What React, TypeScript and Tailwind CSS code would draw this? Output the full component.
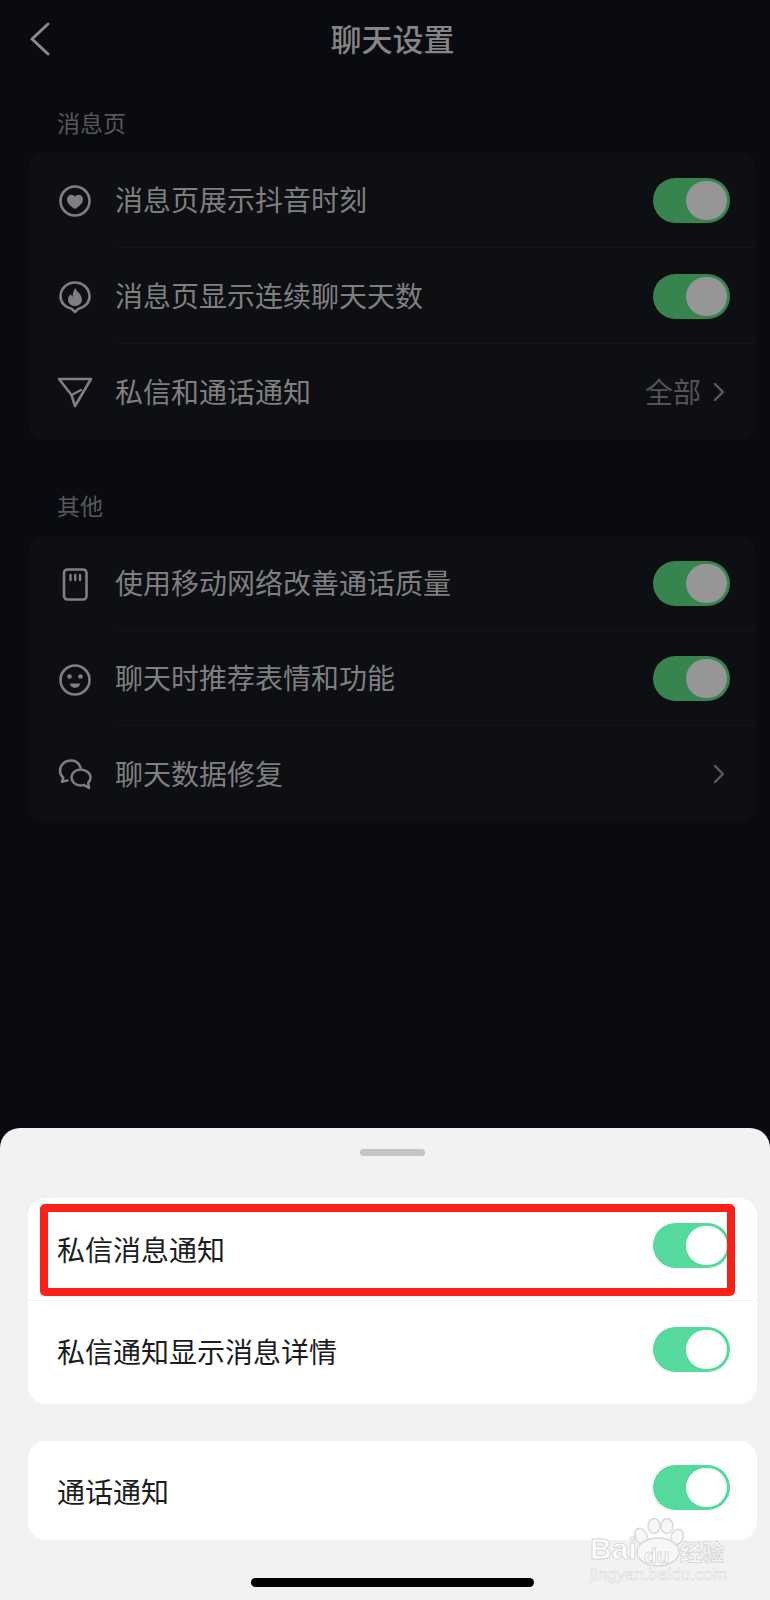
import React from 'react';

const Toggle: React.FC<{ light?: boolean }> = ({ light }) => (
  <div
    className={`relative h-[45px] w-[77px] shrink-0 rounded-full ${
      light ? 'bg-[#55d99c]' : 'mt-[1px] bg-[#36854f]'
    }`}
  >
    <div
      className={`absolute left-[33px] top-[3px] h-[39px] w-[41px] rounded-full ${
        light ? 'bg-white' : 'bg-[#969696]'
      }`}
    ></div>
  </div>
);

const Chevron = () => (
  <svg width="12" height="20" viewBox="0 0 12 20" fill="none" className="shrink-0">
    <path d="M2 2l8 8-8 8" stroke="#5c5c5e" strokeWidth="2.4" strokeLinecap="round" strokeLinejoin="round" />
  </svg>
);

const HeartIcon = () => (
  <svg width="36" height="36" viewBox="0 0 36 36" fill="none">
    <circle cx="18" cy="18" r="14.5" stroke="#7f7f81" strokeWidth="2.6" />
    <path d="M18 26c-5-3.2-8-6.2-8-9.6 0-2.8 2-4.6 4.400-4.600 1.500 0 2.800.7 3.600 1.900.8-1.200 2.100-1.900 3.600-1.900 2.400 0 4.400 1.800 4.400 4.600 0 3.400-3 6.400-8 9.600z" fill="#7f7f81" />
  </svg>
);

const FlameIcon = () => (
  <svg width="36" height="36" viewBox="0 0 36 36" fill="none">
    <path d="M18 33l-3-2.900C8.500 28.700 3.500 24 3.500 17.500 3.500 9.500 10 3.500 18 3.500s14.500 6 14.500 14c0 6.500-5 11.200-11.500 12.600z" stroke="#7f7f81" strokeWidth="2.6" strokeLinejoin="round" />
    <path d="M18.500 9c.5 3.500 6.500 6 6.500 11.500 0 3.800-3 6.500-7 6.500s-7-2.700-7-6.300c0-2.700 1.400-4.400 3-5.700.2 1.400.8 2.200 1.700 2.700C15.500 14.500 16.500 11 18.500 9z" fill="#7f7f81" />
  </svg>
);

const SendIcon = () => (
  <svg width="36" height="32" viewBox="0 0 36 32" fill="none">
    <path d="M2 2h32L18 29l-3.500-11z" stroke="#7f7f81" strokeWidth="2.6" strokeLinejoin="round" />
    <path d="M14.500 18L24 13" stroke="#7f7f81" strokeWidth="2.4" strokeLinecap="round" />
  </svg>
);

const SimIcon = () => (
  <svg width="36" height="36" viewBox="0 0 36 36" fill="none">
    <rect x="7" y="2.500" width="22.500" height="30" rx="3.500" stroke="#7f7f81" strokeWidth="2.6" />
    <path d="M13.500 8v5M18.200 8v5M23 8v5" stroke="#7f7f81" strokeWidth="2.400" strokeLinecap="round" />
  </svg>
);

const FaceIcon = () => (
  <svg width="36" height="36" viewBox="0 0 36 36" fill="none">
    <circle cx="18" cy="18" r="14.500" stroke="#7f7f81" strokeWidth="2.600" />
    <circle cx="12.500" cy="14.500" r="2.300" fill="#7f7f81" />
    <circle cx="23.500" cy="14.500" r="2.300" fill="#7f7f81" />
    <path d="M13 21.500h10c0 2.600-2.200 4.300-5 4.300s-5-1.700-5-4.300z" fill="#7f7f81" />
  </svg>
);

const ChatIcon = () => (
  <svg width="36" height="34" viewBox="0 0 36 34" fill="none">
    <path d="M23.500 9.500C22 5 18.500 2.500 14 2.500 8 2.500 3 7 3 12.500c0 3 1.300 5.500 3.300 7.200l-1.300 4 5.500-1.300" stroke="#7f7f81" strokeWidth="2.500" strokeLinecap="round" strokeLinejoin="round" />
    <path d="M23.500 11.500c-5 0-9 3.500-9 8s4 8 9 8c1.300 0 2.500-.2 3.500-.6l5 3.100-.8-5.200c1.400-1.400 2.300-3.300 2.300-5.300 0-4.500-5-8-10-8z" stroke="#7f7f81" strokeWidth="2.500" strokeLinejoin="round" />
  </svg>
);

const DarkRow: React.FC<{
  icon: React.ReactNode;
  label: string;
  last?: boolean;
  short?: boolean;
  children: React.ReactNode;
}> = ({ icon, label, last, short, children }) => (
  <div className={`flex items-stretch ${short ? 'h-[95px]' : 'h-[96px]'}`}>
    <div className="flex w-[87px] shrink-0 items-center pl-[29px] pt-[2px]">{icon}</div>
    <div className={`flex flex-1 items-center justify-between pr-[26px] ${last ? '' : 'border-b border-[#141519]'}`}>
      <span className="pb-[2px] text-[28px] leading-[40px] text-[#7f7f81]">{label}</span>
      {children}
    </div>
  </div>
);

const SheetRow: React.FC<{ label: string; className?: string; textClassName?: string }> = ({
  label,
  className,
  textClassName,
}) => (
  <div className={`flex items-center justify-between pl-[29px] pr-[27px] ${className ?? ''}`}>
    <span className={`text-[28px] leading-[40px] text-[#1d1d1f] ${textClassName ?? ''}`}>{label}</span>
    <div className="mb-[7px]">
      <Toggle light />
    </div>
  </div>
);

export default function App() {
  return (
    <div className="relative flex h-[1600px] w-[770px] flex-col overflow-hidden bg-[#0a0b10] font-['Noto_Sans_CJK_SC','Noto_Sans',sans-serif]">
      <header className="relative flex h-[78px] shrink-0 items-center justify-center pl-[15px]">
        <svg width="22" height="36" viewBox="0 0 22 36" fill="none" className="absolute left-[29px] top-[21px]">
          <path d="M19 3L3 18l16 15" stroke="#8a8a8c" strokeWidth="3" strokeLinecap="round" strokeLinejoin="round" />
        </svg>
        <h1 className="pb-[2px] text-[31px] font-medium leading-[44px] text-[#858586]">聊天设置</h1>
      </header>

      <div className="flex h-[74px] shrink-0 items-end pb-[17px] pl-[57px] text-[23px] leading-[26px] text-[#58585a]">消息页</div>
      <section className="ml-[28px] w-[728px] shrink-0 rounded-[18px] bg-[#0e0f13]">
        <DarkRow icon={<HeartIcon />} label="消息页展示抖音时刻">
          <Toggle />
        </DarkRow>
        <DarkRow icon={<FlameIcon />} label="消息页显示连续聊天天数">
          <Toggle />
        </DarkRow>
        <DarkRow icon={<SendIcon />} label="私信和通话通知" last>
          <div className="flex items-center gap-[12px] pr-[5px]">
            <span className="pb-[2px] text-[28px] leading-[40px] text-[#545456]">全部</span>
            <Chevron />
          </div>
        </DarkRow>
      </section>

      <div className="flex h-[96px] shrink-0 items-end pb-[18px] pl-[57px] text-[23px] leading-[26px] text-[#58585a]">其他</div>
      <section className="ml-[28px] w-[728px] shrink-0 rounded-[18px] bg-[#0e0f13]">
        <DarkRow icon={<SimIcon />} label="使用移动网络改善通话质量" short>
          <Toggle />
        </DarkRow>
        <DarkRow icon={<FaceIcon />} label="聊天时推荐表情和功能" short>
          <Toggle />
        </DarkRow>
        <DarkRow icon={<ChatIcon />} label="聊天数据修复" last short>
          <div className="pr-[5px]">
            <Chevron />
          </div>
        </DarkRow>
      </section>

      <div className="mt-auto flex h-[472px] shrink-0 flex-col rounded-t-[20px] bg-[#f2f2f3] pt-[21px]">
        <div className="ml-[360px] h-[7px] w-[65px] rounded-full bg-[#c4c4c6]"></div>

        <section className="ml-[28px] mt-[42px] w-[729px] rounded-[18px] bg-white">
          <SheetRow label="私信消息通知" className="h-[103px] border-b border-[#f4f4f5]" />
          <SheetRow label="私信通知显示消息详情" className="h-[103px]" textClassName="pb-[3px]" />
        </section>

        <section className="ml-[28px] mt-[37px] w-[729px] rounded-[18px] bg-white">
          <SheetRow label="通话通知" className="h-[99px]" />
        </section>

        <div className="ml-[251px] mt-[38px] h-[9px] w-[283px] rounded-full bg-black"></div>
      </div>

      {/* red annotation drawn on the screenshot */}
      <div className="absolute left-[40px] top-[1204px] h-[92px] w-[695px] rounded-[5px] border-[8px] border-[#fb2116]"></div>

      {/* watermark */}
      <div className="absolute left-[590px] top-[1518px] h-[66px] w-[140px] font-['Liberation_Sans',sans-serif] text-white [-webkit-text-stroke:1px_#d8d8d8]">
        <svg width="64" height="52" viewBox="0 0 64 52" fill="none" className="absolute left-[40px] top-0">
          <g fill="#f7f7f7" stroke="#d8d8d8" strokeWidth="1.400">
            <ellipse cx="11" cy="18" rx="6" ry="8" transform="rotate(-25 11 18)" />
            <ellipse cx="24" cy="8" rx="6" ry="7.500" />
            <ellipse cx="37" cy="8" rx="6" ry="7.500" />
            <ellipse cx="47" cy="19" rx="6" ry="8" transform="rotate(25 47 19)" />
            <ellipse cx="28" cy="34" rx="21" ry="14" />
          </g>
        </svg>
        <span className="absolute left-0 top-[16px] text-[30px] font-bold leading-[30px]">Bai</span>
        <span className="absolute left-[54px] top-[26px] text-[21px] font-bold leading-[24px]">du</span>
        <span className="absolute left-[90px] top-[20px] font-['Noto_Sans_CJK_SC',sans-serif] text-[22px] font-bold leading-[24px]">经验</span>
        <span className="absolute left-0 top-[48px] text-[17px] leading-[18px] text-white [-webkit-text-stroke:0.6px_#d8d8d8]">jingyan.baidu.com</span>
      </div>
    </div>
  );
}
